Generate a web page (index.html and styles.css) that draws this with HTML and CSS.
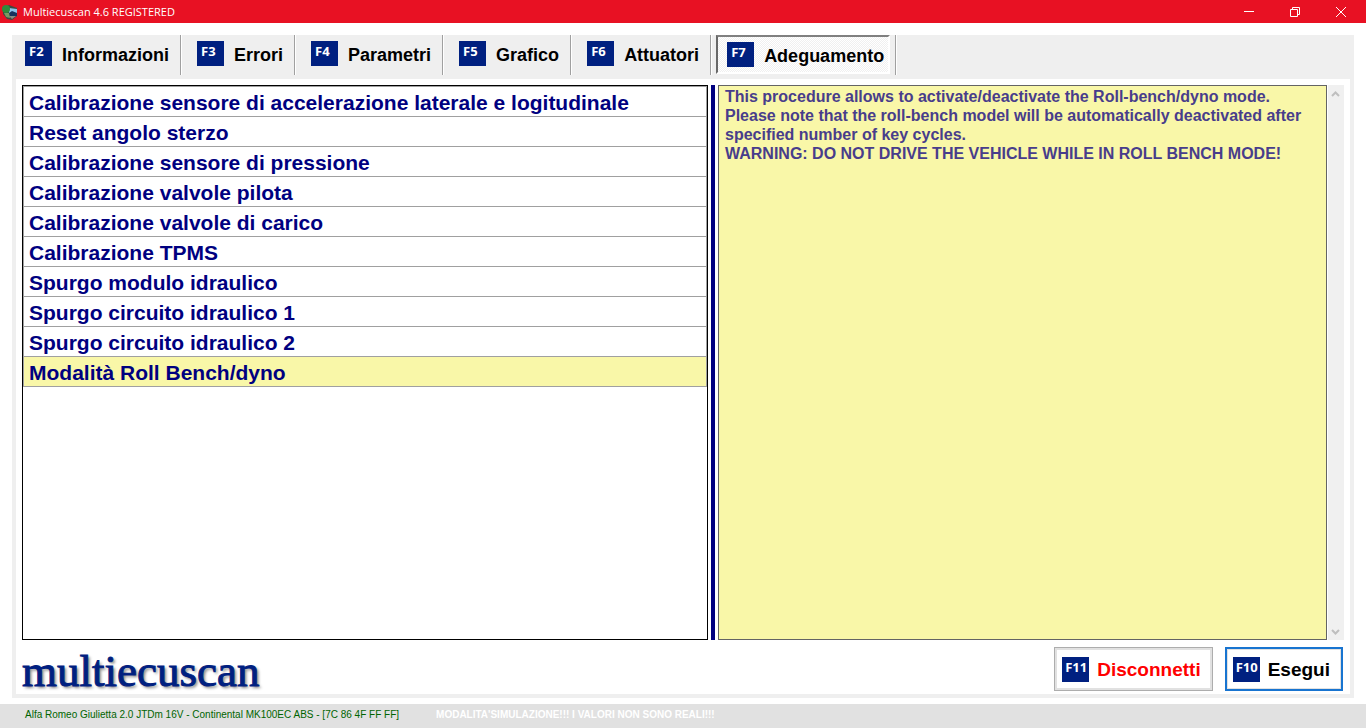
FILE: index.html
```
<!DOCTYPE html>
<html lang="it">
<head>
  <meta charset="UTF-8" />
  <meta name="viewport" content="width=device-width, initial-scale=1.0" />
  <title>Multiecuscan 4.6 REGISTERED</title>
  <link rel="stylesheet" href="styles.css">
</head>
<body>
  <header class="titlebar">
    <svg class="app-icon" width="16" height="16" viewBox="0 0 16 16">
      <path d="M1 4 L7 1 L15 4 L15 12 L10 16 L5 15 L1 10 Z" fill="#3c4a42"/>
      <path d="M7 4 L15 5 V9 L7 9 Z" fill="#8dc3ea"/>
      <path d="M7 9 L10 7 L15 9 V12 L8 12 Z" fill="#17335e"/>
      <circle cx="4" cy="5" r="4" fill="#2f8a3c"/>
      <path d="M2 9 L7 9 L8 14 L4 13 Z" fill="#7a9a62"/>
      <path d="M7 12 L14 12 L10 15 Z" fill="#8b8d86"/>
    </svg>
    <span class="app-title">Multiecuscan 4.6 REGISTERED</span>
    <div class="window-buttons">
      <button aria-label="Riduci"><svg width="12" height="12" viewBox="0 0 12 12"><path d="M1 5.5H11"/></svg></button>
      <button aria-label="Ripristina"><svg width="12" height="12" viewBox="0 0 12 12"><path d="M1.5 3.5H8.5V10.5H1.5ZM3.5 3V1.5H10.5V8.5H9"/></svg></button>
      <button aria-label="Chiudi"><svg width="12" height="12" viewBox="0 0 12 12"><path d="M1 1L11 11M11 1L1 11"/></svg></button>
    </div>
  </header>

  <main class="panel">
    <nav class="toolbar">
      <div class="tab"><button><span class="key">F2</span>Informazioni</button></div>
      <div class="tab"><button><span class="key">F3</span>Errori</button></div>
      <div class="tab"><button><span class="key">F4</span>Parametri</button></div>
      <div class="tab"><button><span class="key">F5</span>Grafico</button></div>
      <div class="tab"><button><span class="key">F6</span>Attuatori</button></div>
      <div class="tab active"><button><span class="key">F7</span>Adeguamento</button></div>
    </nav>

    <div class="content">
      <div class="list-box">
        <ul class="list">
          <li><button>Calibrazione sensore di accelerazione laterale e logitudinale</button></li>
          <li><button>Reset angolo sterzo</button></li>
          <li><button>Calibrazione sensore di pressione</button></li>
          <li><button>Calibrazione valvole pilota</button></li>
          <li><button>Calibrazione valvole di carico</button></li>
          <li><button>Calibrazione TPMS</button></li>
          <li><button>Spurgo modulo idraulico</button></li>
          <li><button>Spurgo circuito idraulico 1</button></li>
          <li><button>Spurgo circuito idraulico 2</button></li>
          <li class="selected"><button>Modalità Roll Bench/dyno</button></li>
        </ul>
      </div>
      <div class="splitter"></div>
      <div class="info">
        <textarea class="info-text" aria-label="Descrizione" readonly>This procedure allows to activate/deactivate the Roll-bench/dyno mode.
Please note that the roll-bench model will be automatically deactivated after specified number of key cycles.
WARNING: DO NOT DRIVE THE VEHICLE WHILE IN ROLL BENCH MODE!</textarea>
        <div class="scrollbar">
          <svg width="16" height="17" viewBox="0 0 16 17"><path d="M4 11L7.5 7.5L11 11"/></svg>
          <svg width="16" height="17" viewBox="0 0 16 17"><path d="M4 7L7.5 10.5L11 7"/></svg>
        </div>
      </div>
    </div>

    <div class="bottom">
      <div class="logo">multiecuscan</div>
      <div class="actions">
        <button class="action disconnect"><span class="key">F11</span>Disconnetti</button>
        <button class="action run"><span class="key">F10</span>Esegui</button>
      </div>
    </div>
  </main>

  <footer class="status">
    <span>Alfa Romeo Giulietta 2.0 JTDm 16V - Continental MK100EC ABS - [7C 86 4F FF FF]</span>
    <span class="simulation">MODALITA'SIMULAZIONE!!! I VALORI NON SONO REALI!!!</span>
  </footer>
</body>
</html>
```

FILE: styles.css
```
* { box-sizing: border-box; }
body { font-family: "Liberation Sans", Arial, sans-serif; margin: 0; min-height: 100vh; background: #fff; color: #000; display: flex; flex-direction: column; }
button { font: inherit; color: inherit; background: none; border: none; margin: 0; padding: 0; cursor: pointer; }

.titlebar { height: 23px; background: #e81123; color: #fff; display: flex; align-items: center; padding-left: 2px; }
.app-title { font-family: "Open Sans", "Segoe UI", sans-serif; font-size: 11px; margin-left: 5px; }
.window-buttons { margin-left: auto; display: flex; }
.window-buttons button { width: 46px; height: 20px; padding-right: 4px; display: flex; align-items: center; justify-content: center; }
.window-buttons svg { fill: none; stroke: #fff; stroke-width: 1; }

.panel { flex: 1; margin: 12px 12px 6px; border: 4px solid #efefef; border-top: none; display: flex; flex-direction: column; }

.toolbar { height: 44px; background: #efefef; display: flex; align-items: flex-start; font-size: 18px; font-weight: bold; line-height: 22px; }
.tab { height: 40px; border-right: 1px solid #a0a0a0; box-shadow: 1px 0 #fff; }
.tab button { height: 37px; padding: 0 11px 6px 16px; display: flex; align-items: flex-end; gap: 10px; }
.tab:first-child button { padding-left: 9px; }
.tab.active { padding: 0 5px; }
.tab.active button { height: 39px; padding: 0 4px 5px 9px; background: repeating-conic-gradient(#fff 0 25%, #f0f0f0 0 50%) 0 0 / 2px 2px; border: 2px solid; border-color: #808080 #fff #fff #696969; }
.key { width: 27px; height: 25px; flex: none; background: #002080; color: #fff; font-family: "Open Sans", sans-serif; font-size: 13px; font-weight: bold; line-height: 20px; text-align: left; padding-left: 4px; }

.content { flex: 1; padding: 6px 6px 0; display: grid; grid-template-columns: 686fr 4px 626fr; gap: 3px; }
.list-box { border: 1px solid #000; }
.list { list-style: none; margin: 0; padding: 0; border: 1px solid #a0a0a0; border-bottom: none; }
.list li { border-bottom: 1px solid #a0a0a0; }
.list button { display: block; width: 100%; height: 29px; padding: 2px 0 0 5px; text-align: left; color: #000080; font-size: 21px; font-weight: bold; line-height: 27px; }
.list .selected { background: #f9f7a8; }
.splitter { background: #000080; }
.info { display: flex; gap: 1px; }
.info-text { flex: 1; min-width: 0; margin: 0; padding: 1px 6px; border: 1px solid #646464; background: #f9f7a8; color: #483d8b; font: bold 16px/19px "Liberation Sans", Arial, sans-serif; resize: none; outline: none; overflow: hidden; }
.scrollbar { width: 16px; background: #f0f0f0; display: flex; flex-direction: column; justify-content: space-between; }
.scrollbar svg { fill: none; stroke: #bfbfbf; stroke-width: 2; }

.bottom { height: 54px; padding: 4px 7px 0 6px; display: flex; align-items: center; justify-content: space-between; }
.logo { font-family: "Liberation Serif", serif; font-size: 45px; line-height: 44px; padding-top: 4px; color: #002080; -webkit-text-stroke: 1px #002080; text-shadow: 2px 2px 3px #808080; }
.actions { display: flex; gap: 12px; font-size: 19px; font-weight: bold; line-height: 25px; }
.action { height: 44px; border: 1px solid #adadad; box-shadow: inset 0 0 0 2px #e1e1e1; display: flex; align-items: center; gap: 8px; }
.action .key { padding-left: 3px; }
.disconnect { color: #f00; padding: 0 11px 0 7px; }
.run { border: 2px solid #1874d0; padding: 0 11px 0 6px; box-shadow: inset 0 0 0 1px #e1e1e1; }

.status { height: 24px; padding: 0 25px 2px; background: #e1e1e1; color: #006400; font-size: 10px; display: flex; align-items: center; gap: 37px; line-height: 20px; }
.simulation { color: #fff; font-weight: bold; }
```
